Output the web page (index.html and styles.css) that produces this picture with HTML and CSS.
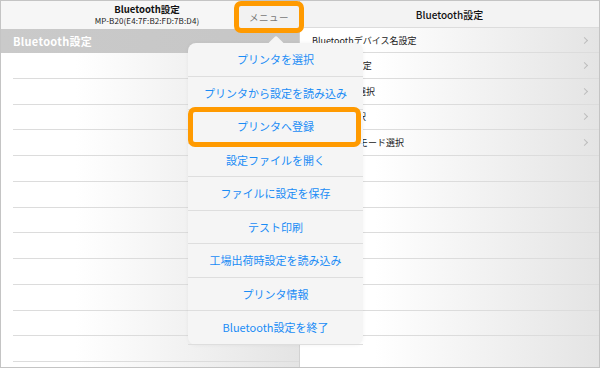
FILE: index.html
```html
<!DOCTYPE html>
<html lang="ja">
<head>
    <meta charset="UTF-8">
    <title>Bluetooth設定</title>
    <link rel="stylesheet" href="styles.css">
</head>
<body>
    <div class="frame">
        <div class="panel panel-left">
            <div class="nav">
                <div class="nav-title">Bluetooth設定</div>
                <div class="nav-sub">MP-B20(E4:7F:B2:FD:7B:D4)</div>
            </div>
            <div class="section">Bluetooth設定</div>
            <ul class="list">
                <li></li><li></li><li></li><li></li><li></li><li></li>
                <li></li><li></li><li></li><li></li><li></li><li></li>
            </ul>
        </div>

        <div class="panel panel-right">
            <div class="r-head">Bluetooth設定</div>
            <ul class="list list-right">
                <li>Bluetoothデバイス名設定<span class="chev"></span></li>
                <li>PINコード設定<span class="chev"></span></li>
                <li>接続タイプ選択<span class="chev"></span></li>
                <li>通信方式選択<span class="chev"></span></li>
                <li>ペアリング モード選択<span class="chev"></span></li>
                <li></li><li></li><li></li><li></li><li></li><li></li><li></li>
            </ul>
        </div>

        <div class="menu-btn">メニュー</div>

        <div class="popover">
            <div class="pop-item">プリンタを選択</div>
            <div class="pop-item">プリンタから設定を読み込み</div>
            <div class="pop-item">プリンタへ登録</div>
            <div class="pop-item">設定ファイルを開く</div>
            <div class="pop-item">ファイルに設定を保存</div>
            <div class="pop-item">テスト印刷</div>
            <div class="pop-item">工場出荷時設定を読み込み</div>
            <div class="pop-item">プリンタ情報</div>
            <div class="pop-item">Bluetooth設定を終了</div>
            <div class="pick"></div>
        </div>
    </div>
</body>
</html>
```

FILE: styles.css
```css
* {
    margin: 0;
    padding: 0;
    box-sizing: border-box;
}

body {
    font-family: "Noto Sans CJK JP", "Noto Sans", sans-serif;
    background: #fff;
    color: #222;
}

.frame {
    position: relative;
    width: 600px;
    height: 368px;
    border: 1px solid #c4c4c4;
    display: grid;
    grid-template-columns: 299px 1fr;
    overflow: hidden;
}

.panel {
    background: linear-gradient(90deg, #fff 25%, #e4e4e4 100%);
    overflow: hidden;
}

.panel-left {
    border-right: 1px solid #d2d2d2;
}

.list {
    list-style: none;
}

.list li {
    height: 25.75px;
    margin-left: 12px;
    border-bottom: 1px solid #dcdcdc;
    display: flex;
    align-items: center;
    justify-content: space-between;
    padding-right: 12px;
    font-size: 9px;
    color: #222;
}

/* left side */
.nav {
    height: 28px;
    background: #f6f6f6;
    display: flex;
    flex-direction: column;
    align-items: center;
    justify-content: center;
    gap: 1px;
    padding-right: 6px;
}

.nav-title {
    font-size: 9.5px;
    line-height: 11px;
    font-weight: 700;
    color: #111;
}

.nav-sub {
    font-size: 8px;
    line-height: 10px;
    color: #222;
    letter-spacing: 0.1px;
}

.section {
    height: 24px;
    background: linear-gradient(90deg, #cacaca 0%, #c6c6c6 100%);
    color: #fff;
    font-size: 11px;
    font-weight: 700;
    padding-left: 12px;
    display: flex;
    align-items: center;
    letter-spacing: 0.3px;
}

/* right side */
.r-head {
    height: 27px;
    background: #f3f3f3;
    border-bottom: 1px solid #dcdcdc;
    display: flex;
    align-items: center;
    justify-content: center;
    font-size: 10px;
    font-weight: 500;
    color: #111;
}

.list-right li:first-child {
    height: 25px;
}

.chev {
    width: 5px;
    height: 5px;
    border-top: 1px solid #bdbdbd;
    border-right: 1px solid #bdbdbd;
    transform: rotate(45deg);
}

/* menu button with callout */
.menu-btn {
    position: absolute;
    left: 233px;
    top: 0;
    width: 70px;
    height: 32px;
    border: 5px solid #ff9a00;
    border-radius: 7px;
    background: #f2f2f2;
    display: flex;
    align-items: center;
    justify-content: center;
    font-size: 9.5px;
    color: #777;
    letter-spacing: 0.5px;
}

/* popover menu */
.popover {
    position: absolute;
    left: 187px;
    top: 42px;
    width: 175px;
    background: #f5f5f5;
    border-radius: 8px;
    box-shadow: 0 0 4px rgba(0, 0, 0, 0.05);
    display: flex;
    flex-direction: column;
}

.popover::before {
    content: "";
    position: absolute;
    left: 82px;
    top: -5px;
    width: 12px;
    height: 12px;
    background: #f5f5f5;
    transform: rotate(45deg);
    border-radius: 2px;
}

.pop-item {
    position: relative;
    height: 33.5px;
    display: flex;
    align-items: center;
    justify-content: center;
    font-size: 11px;
    color: #1a8cf5;
    border-bottom: 1px solid #dedede;
}

.pop-item:last-of-type {
    border-bottom: none;
}

.pick {
    position: absolute;
    left: 0;
    top: 64px;
    width: 173px;
    height: 40px;
    border: 5px solid #ff9a00;
    border-radius: 7px;
}
```
